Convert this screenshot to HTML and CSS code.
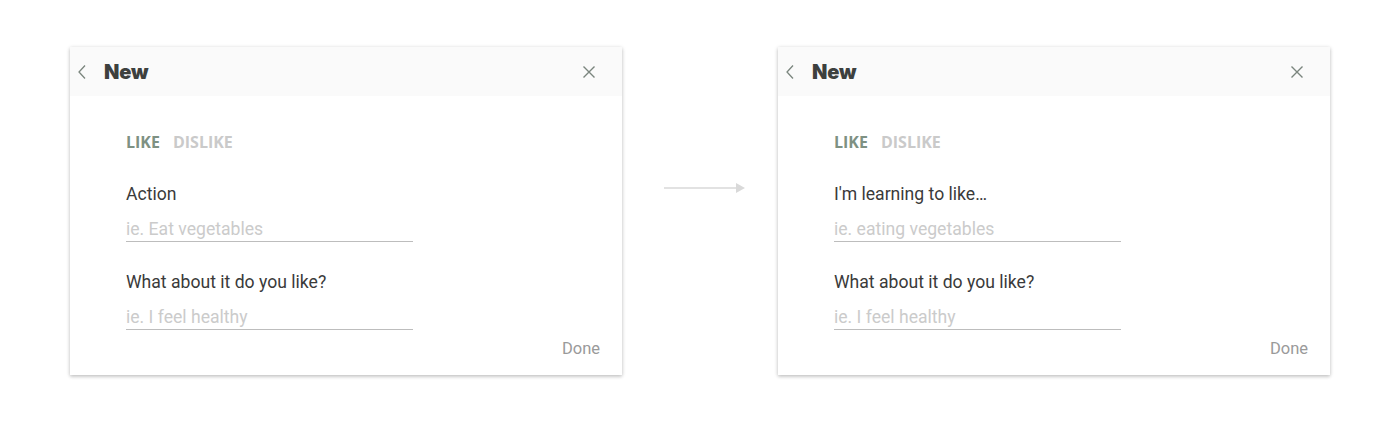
FILE: index.html
```html
<!DOCTYPE html>
<html>
<head>
<meta charset="utf-8">
<link rel="stylesheet" href="styles.css">
</head>
<body>
<div class="stage">
  <div class="card">
    <div class="header">
      <svg class="back" width="10" height="16" viewBox="0 0 10 16"><path d="M8 1.5 L2 8 L8 14.5" fill="none" stroke="#7a857d" stroke-width="1.3"/></svg>
      <div class="title">New</div>
      <svg class="close" width="14" height="14" viewBox="0 0 14 14"><path d="M1.5 1.5 L12.5 12.5 M12.5 1.5 L1.5 12.5" fill="none" stroke="#7a857d" stroke-width="1.4"/></svg>
    </div>
    <div class="body">
      <div class="tabs"><span class="tab active">LIKE</span><span class="tab">DISLIKE</span></div>
      <div class="field">
        <div class="label">Action</div>
        <div class="input">ie. Eat vegetables</div>
      </div>
      <div class="field">
        <div class="label">What about it do you like?</div>
        <div class="input">ie. I feel healthy</div>
      </div>
      <div class="actions"><span class="done">Done</span></div>
    </div>
  </div>
  <div class="arrow">
    <svg width="82" height="14" viewBox="0 0 82 14"><path d="M0 7 H74" stroke="#d9d9d9" stroke-width="1.5"/><path d="M72 2 L81 7 L72 12 Z" fill="#d9d9d9"/></svg>
  </div>
  <div class="card">
    <div class="header">
      <svg class="back" width="10" height="16" viewBox="0 0 10 16"><path d="M8 1.5 L2 8 L8 14.5" fill="none" stroke="#7a857d" stroke-width="1.3"/></svg>
      <div class="title">New</div>
      <svg class="close" width="14" height="14" viewBox="0 0 14 14"><path d="M1.5 1.5 L12.5 12.5 M12.5 1.5 L1.5 12.5" fill="none" stroke="#7a857d" stroke-width="1.4"/></svg>
    </div>
    <div class="body">
      <div class="tabs"><span class="tab active">LIKE</span><span class="tab">DISLIKE</span></div>
      <div class="field">
        <div class="label">I'm learning to like…</div>
        <div class="input">ie. eating vegetables</div>
      </div>
      <div class="field">
        <div class="label">What about it do you like?</div>
        <div class="input">ie. I feel healthy</div>
      </div>
      <div class="actions"><span class="done">Done</span></div>
    </div>
  </div>
</div>
</body>
</html>
```
FILE: styles.css
```css
html, body { margin: 0; padding: 0; background: #fff; }
body { width: 1400px; height: 423px; overflow: hidden; font-family: Roboto, "Liberation Sans", sans-serif; }
.stage { display: flex; align-items: flex-start; padding: 47px 0 0 70px; }
.card {
  width: 552px; height: 328px; background: #fff;
  box-shadow: 0 1px 4px rgba(0,0,0,0.22), 0 2px 3px rgba(0,0,0,0.08);
  display: flex; flex-direction: column;
}
.header {
  height: 49px; background: #fafafa; display: flex; align-items: center;
  padding: 0 26px 0 7px;
}
.back { margin-right: 17px; }
.title { font-family: Inter, "Open Sans", sans-serif; font-weight: 900; font-size: 20px; color: #3d403e; flex: 1; letter-spacing: -0.1px; }
.body { padding: 36px 22px 0 56px; display: flex; flex-direction: column; }
.tabs { display: flex; gap: 13px; font-family: "Open Sans", Inter, sans-serif; font-weight: 700; font-size: 16px; line-height: 20px; }
.tab { color: #cacaca; }
.tab.active { color: #7e9183; }
.field { width: 287px; margin-top: 31px; }
.field + .field { margin-top: 29px; }
.label { font-size: 17.6px; line-height: 22px; color: #3a3a3a; }
.input { margin-top: 13px; font-size: 17.6px; line-height: 22px; color: #cbcbcb; border-bottom: 1px solid #bdbdbd; padding-bottom: 1px; }
.actions { display: flex; justify-content: flex-end; margin-top: 9px; }
.done { font-size: 16.5px; color: #9a9a9a; line-height: 20px; }
.arrow { width: 156px; display: flex; justify-content: center; padding-top: 134px; }
.arrow svg { margin-left: 10px; }
```
